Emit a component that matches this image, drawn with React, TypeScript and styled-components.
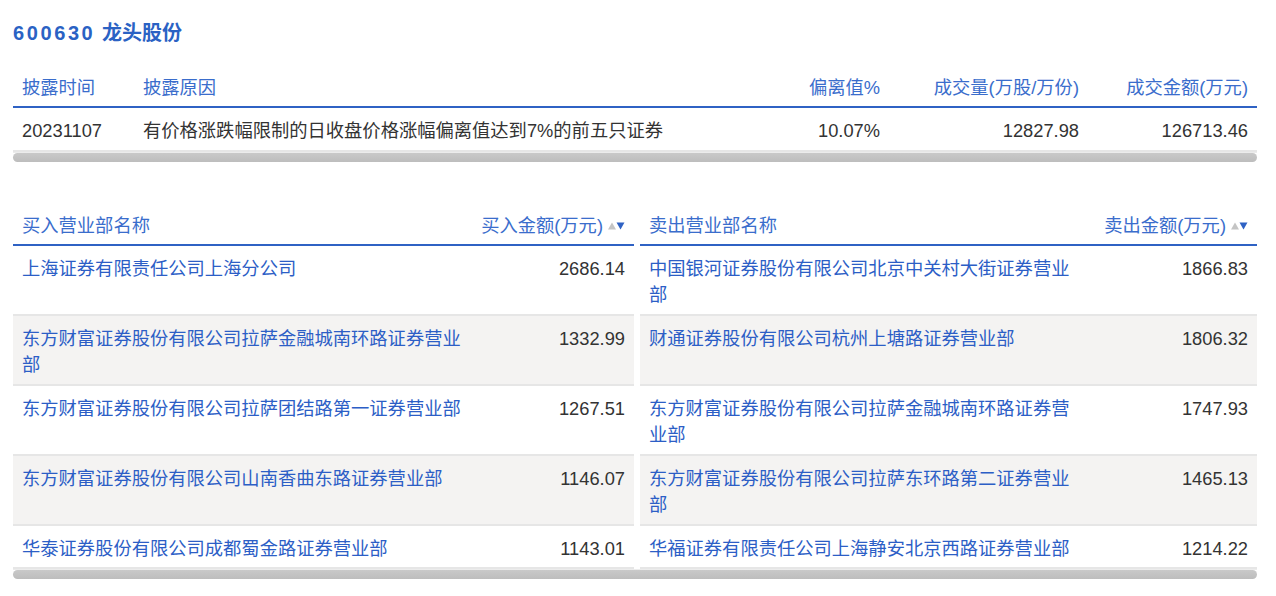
import React from "react";
import styled, { createGlobalStyle } from "styled-components";

const Global = createGlobalStyle`
  html, body { margin: 0; padding: 0; background: #fff; }
  body { font-family: "Liberation Sans", "Noto Sans CJK SC", sans-serif; }
`;

const Page = styled.div`
  padding: 20px 19px 0 13px;
  width: 1244px;
`;

const Title = styled.h2`
  margin: 0 0 21px;
  font-size: 20px;
  line-height: 26px;
  font-weight: 700;
  color: #2a62c4;
`;

const Code = styled.span`
  letter-spacing: 2.6px;
  margin-right: 1px;
`;

const Scroller = styled.div`
  display: flex;
  flex-direction: column;
`;

const ScrollTrack = styled.div`
  height: 10px;
  border-top: 1px solid #ececec;
  box-sizing: border-box;
  display: flex;
`;

const ScrollThumb = styled.div`
  flex: 1;
  height: 9px;
  border-radius: 5px;
  background: linear-gradient(#c9c9c9, #bdbdbd);
`;

const InfoGrid = styled.div`
  display: grid;
  grid-template-columns: 121px 1fr 100px 199px 169px;
`;

const BrokerGrid = styled.div`
  display: grid;
  grid-template-columns: 460px 161px 6px 450px 167px;
`;

const HeadCell = styled.div<{ $right?: boolean }>`
  padding: 8px 9px 5px ${(p) => (p.$right ? "0" : "9px")};
  font-size: 18.3px;
  line-height: 26px;
  color: #3a6dcc;
  border-bottom: 2px solid #2f62c4;
  white-space: nowrap;
  display: flex;
  align-items: center;
  justify-content: ${(p) => (p.$right ? "flex-end" : "flex-start")};
  gap: 5px;
`;

const Cell = styled.div<{ $right?: boolean; $alt?: boolean; $link?: boolean }>`
  padding: 10px 9px 5px;
  font-size: 18.3px;
  line-height: 26.5px;
  color: ${(p) => (p.$link ? "#2c5ec6" : "#333")};
  background: ${(p) => (p.$alt ? "#f4f3f2" : "#fff")};
  border-bottom: 2px solid #e6e6e6;
  text-align: ${(p) => (p.$right ? "right" : "left")};
`;

const Gutter = styled.div`
  background: #fff;
`;

const Spacer = styled.div`
  height: 43px;
`;

const SortIcon = styled.svg`
  flex-shrink: 0;
`;

const Arrows = () => (
  <SortIcon width="17" height="8" viewBox="0 0 17 8">
    <polygon points="0,7.5 4,0.5 8,7.5" fill="#c4c4c4" />
    <polygon points="8.5,0.5 16.5,0.5 12.5,7.5" fill="#2f62c4" />
  </SortIcon>
);

const buys: [string, string][] = [
  ["上海证券有限责任公司上海分公司", "2686.14"],
  ["东方财富证券股份有限公司拉萨金融城南环路证券营业部", "1332.99"],
  ["东方财富证券股份有限公司拉萨团结路第一证券营业部", "1267.51"],
  ["东方财富证券股份有限公司山南香曲东路证券营业部", "1146.07"],
  ["华泰证券股份有限公司成都蜀金路证券营业部", "1143.01"],
];

const sells: [string, string][] = [
  ["中国银河证券股份有限公司北京中关村大街证券营业部", "1866.83"],
  ["财通证券股份有限公司杭州上塘路证券营业部", "1806.32"],
  ["东方财富证券股份有限公司拉萨金融城南环路证券营业部", "1747.93"],
  ["东方财富证券股份有限公司拉萨东环路第二证券营业部", "1465.13"],
  ["华福证券有限责任公司上海静安北京西路证券营业部", "1214.22"],
];

export default function App() {
  return (
    <>
      <Global />
      <Page>
        <Title>
          <Code>600630</Code> 龙头股份
        </Title>
        <Scroller>
          <InfoGrid>
            <HeadCell>披露时间</HeadCell>
            <HeadCell>披露原因</HeadCell>
            <HeadCell $right>偏离值%</HeadCell>
            <HeadCell $right>成交量(万股/万份)</HeadCell>
            <HeadCell $right>成交金额(万元)</HeadCell>
            <Cell>20231107</Cell>
            <Cell>有价格涨跌幅限制的日收盘价格涨幅偏离值达到7%的前五只证券</Cell>
            <Cell $right>10.07%</Cell>
            <Cell $right>12827.98</Cell>
            <Cell $right>126713.46</Cell>
          </InfoGrid>
          <ScrollTrack>
            <ScrollThumb />
          </ScrollTrack>
        </Scroller>
        <Spacer />
        <Scroller>
          <BrokerGrid>
            <HeadCell>买入营业部名称</HeadCell>
            <HeadCell $right>
              买入金额(万元)
              <Arrows />
            </HeadCell>
            <Gutter />
            <HeadCell>卖出营业部名称</HeadCell>
            <HeadCell $right>
              卖出金额(万元)
              <Arrows />
            </HeadCell>
            {buys.map(([bName, bAmt], i) => {
              const [sName, sAmt] = sells[i];
              const alt = i % 2 === 1;
              return (
                <React.Fragment key={i}>
                  <Cell $link $alt={alt}>{bName}</Cell>
                  <Cell $right $alt={alt}>{bAmt}</Cell>
                  <Gutter />
                  <Cell $link $alt={alt}>{sName}</Cell>
                  <Cell $right $alt={alt}>{sAmt}</Cell>
                </React.Fragment>
              );
            })}
          </BrokerGrid>
          <ScrollTrack>
            <ScrollThumb />
          </ScrollTrack>
        </Scroller>
      </Page>
    </>
  );
}
